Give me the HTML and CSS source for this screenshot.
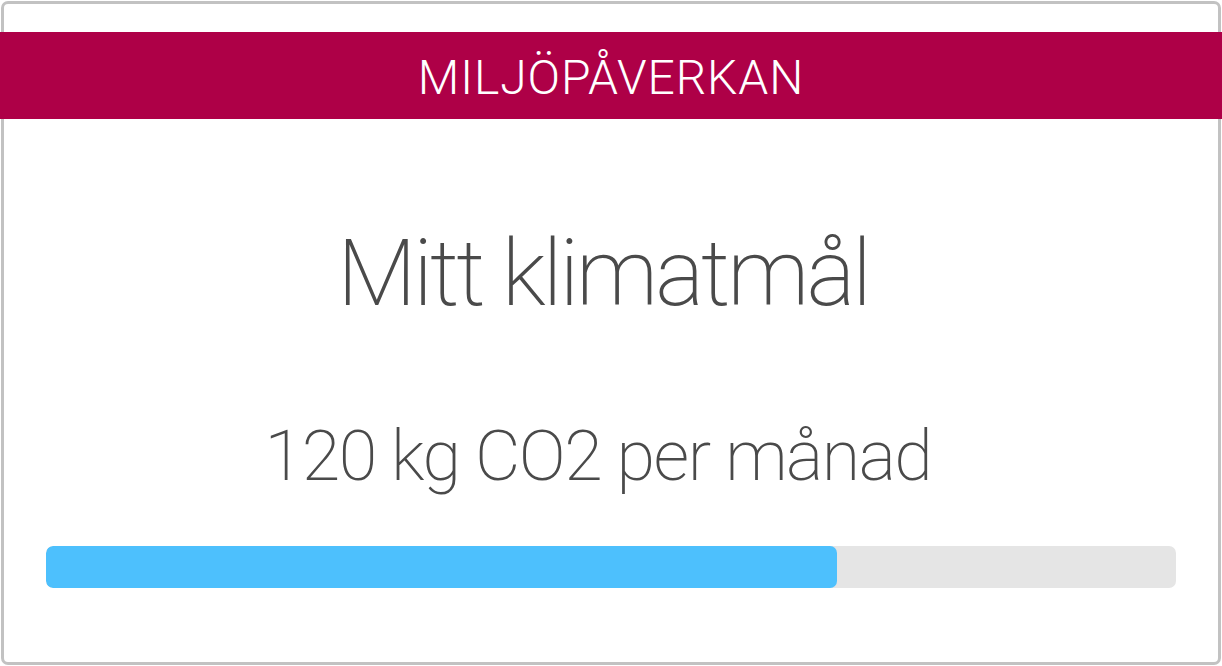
FILE: index.html
```html
<!DOCTYPE html>
<html lang="sv">
<head>
<meta charset="utf-8">
<title>Miljöpåverkan</title>
<link rel="stylesheet" href="styles.css">
</head>
<body>
<div class="card">
  <div class="card-header">MILJÖPÅVERKAN</div>
  <h1 class="title">Mitt klimatmål</h1>
  <p class="goal">120 kg CO2 per månad</p>
  <div class="progress">
    <div class="progress-fill" style="width: 70%"></div>
  </div>
</div>
</body>
</html>
```
FILE: styles.css
```css
html, body {
  margin: 0;
  padding: 0;
  background: #ffffff;
}
body {
  font-family: Roboto, "Liberation Sans", sans-serif;
  overflow: hidden;
}
.card {
  box-sizing: border-box;
  margin: 1px;
  height: 664px;
  border: 3px solid #c2c2c2;
  border-radius: 7px;
  padding: 28px 42px 0;
  display: flex;
  flex-direction: column;
}
.card-header {
  margin: 0 -46px;
  box-sizing: border-box;
  height: 87px;
  padding-top: 4px;
  background: #ae0047;
  color: #ffffff;
  font-size: 48px;
  font-weight: 300;
  letter-spacing: 0.9px;
  line-height: 83px;
  text-align: center;
}
.title {
  margin: 109px 0 0;
  padding-right: 16px;
  font-size: 92px;
  line-height: 92px;
  font-weight: 200;
  letter-spacing: -3px;
  color: #4a4a4a;
  text-align: center;
}
.goal {
  margin: 101px 0 0;
  padding-right: 26px;
  font-size: 70px;
  line-height: 70px;
  font-weight: 200;
  letter-spacing: -1.5px;
  color: #4a4a4a;
  text-align: center;
}
.progress {
  margin-top: 55px;
  height: 42px;
  background: #e5e5e5;
  border-radius: 7px;
  overflow: hidden;
}
.progress-fill {
  height: 100%;
  background: #4dc0fd;
  border-radius: 7px;
}
```
